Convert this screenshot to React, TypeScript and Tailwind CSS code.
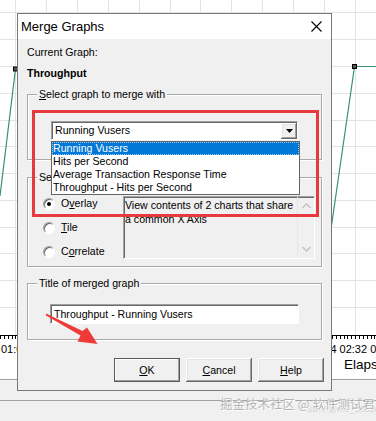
import React from "react";

const bevelRaised =
  "shadow-[inset_-1px_-1px_0_#696969,inset_1px_1px_0_#ffffff,inset_-2px_-2px_0_#a0a0a0,inset_2px_2px_0_#e3e3e3]";
const sunken =
  "border border-t-[#a0a0a0] border-l-[#a0a0a0] border-b-[#ffffff] border-r-[#ffffff] shadow-[inset_1px_1px_0_#696969]";

function Radio({ checked }: { checked?: boolean }) {
  return (
    <span className="flex h-[12px] w-[12px] shrink-0 items-center justify-center rounded-full border border-t-[#a0a0a0] border-l-[#a0a0a0] border-b-[#ffffff] border-r-[#ffffff] bg-white shadow-[inset_1px_1px_0_#696969]">
      {checked && <span className="h-[4px] w-[4px] rounded-full bg-black" />}
    </span>
  );
}

function Group({
  label,
  className,
  children,
}: {
  label: React.ReactNode;
  className: string;
  children?: React.ReactNode;
}) {
  return (
    <div
      className={`relative border border-[#a8a8a8] shadow-[inset_1px_1px_0_#ffffff,1px_1px_0_#ffffff] ${className}`}
    >
      <span className="absolute left-[9px] top-[-7px] bg-[#f0f0f0] px-[2px] leading-[13px]">
        {label}
      </span>
      {children}
    </div>
  );
}

function Btn({ children, def }: { children: React.ReactNode; def?: boolean }) {
  return (
    <div
      className={`flex h-[24px] w-[66px] items-center justify-center bg-[#f0f0f0] leading-[13px] ${
        def
          ? "border border-[#5a5a5a] shadow-[inset_-1px_-1px_0_#a0a0a0,inset_1px_1px_0_#ffffff]"
          : bevelRaised
      }`}
    >
      {children}
    </div>
  );
}

export default function App() {
  const vx = [15, 46, 77, 108, 139, 170, 200, 231, 262, 293, 324, 355];
  const hy = [12, 39, 66, 93, 120, 146, 173, 200, 227, 253, 280, 307];
  const ticks = Array.from({ length: 98 }, (_, i) => Math.round(i * 3.86) + 0.5);
  const items = [
    "Running Vusers",
    "Hits per Second",
    "Average Transaction Response Time",
    "Throughput - Hits per Second",
  ];

  return (
    <div className="relative flex h-[421px] w-[376px] flex-col overflow-hidden bg-[#f0f0f0] font-['Liberation_Sans',Arial,sans-serif] text-black">
      {/* chart canvas */}
      <div className="relative h-[379px] bg-white">
        <svg className="absolute left-0 top-0" width="376" height="379">
          {vx.map((x) => (
            <line key={"v" + x} x1={x + 0.5} y1={0} x2={x + 0.5} y2={335} stroke="#dfe6e6" />
          ))}
          {hy.map((y) => (
            <line key={"h" + y} x1={0} y1={y + 0.5} x2={376} y2={y + 0.5} stroke="#dfe6e6" />
          ))}
          <line x1={0} y1={335.5} x2={376} y2={335.5} stroke="#000" />
          {ticks.map((x) => (
            <line key={"t" + x} x1={x} y1={336} x2={x} y2={339} stroke="#000" />
          ))}
          <polyline points="15.5,69 0,196" fill="none" stroke="#3b8e7e" strokeWidth="1.2" />
          <polyline points="376,66.5 354.5,66.5 330,236" fill="none" stroke="#3b8e7e" strokeWidth="1.2" />
          <rect x={13.5} y={67} width={4} height={4} fill="#555" stroke="#000" />
          <rect x={352.5} y={64.5} width={4} height={4} fill="#555" stroke="#000" />
        </svg>
        <span className="absolute left-[1px] top-[343px] text-[11px] leading-[13px]">01:04</span>
        <span className="absolute left-[309px] top-[343px] whitespace-nowrap text-[11px] leading-[13px]">
          02:24 02:32 02:40
        </span>
        <span className="absolute left-[344px] top-[357px] whitespace-nowrap text-[13.5px] leading-[16px]">
          Elapsed Time
        </span>
      </div>
      <div className="h-[21px] border-t border-[#a0a0a0] bg-[#f0f0f0]" />
      <div className="flex-1 border-t border-[#a0a0a0] bg-[#f0f0f0]" />

      {/* watermark */}
      <span className="absolute left-[300px] top-[404px] whitespace-nowrap text-[9px] leading-[10px] text-[#d2d2d2]">
        CSDN @m0_58550
      </span>
      <span className="absolute left-[220px] top-[396px] whitespace-nowrap font-['Noto_Sans_CJK_SC',sans-serif] text-[12.5px] leading-[15px] text-[#b4b4b4] [text-shadow:0_0_1px_#fff,1px_1px_0_#fff]">
        掘金技术社区 @ 软件测试君
      </span>

      {/* dialog window */}
      <div className="absolute left-[17px] top-[13px] flex h-[378px] w-[315px] flex-col border border-[#787878] bg-[#f0f0f0] text-[10.6px] leading-[13px]">
        <div className="flex h-[25px] items-center justify-between bg-white pl-[3px] pr-[9px]">
          <span className="text-[13px] leading-[16px]">Merge Graphs</span>
          <svg width="11" height="11" viewBox="0 0 11 11">
            <path d="M0.5 0.5 L10.5 10.5 M10.5 0.5 L0.5 10.5" stroke="#000" strokeWidth="1.1" />
          </svg>
        </div>

        <div className="flex flex-1 flex-col px-[9px] pt-[7px]">
          <div>Current Graph:</div>
          <div className="mt-[8px] font-bold">Throughput</div>

          <Group
            className="mt-[14px] h-[66px]"
            label={
              <>
                <u>S</u>elect graph to merge with
              </>
            }
          >
            <div className={`relative ml-[23px] mt-[26px] flex h-[19px] w-[247px] items-center bg-white ${sunken}`}>
              <span className="pl-[3px]">Running Vusers</span>
              <div className={`absolute bottom-0 right-0 top-[1px] flex w-[16px] items-center justify-center bg-[#f0f0f0] ${bevelRaised}`}>
                <svg width="7" height="4" viewBox="0 0 7 4">
                  <polygon points="0,0 7,0 3.5,4" fill="#000" />
                </svg>
              </div>
              <div className="absolute left-[-1px] top-[19px] z-10 flex h-[54px] w-[249px] flex-col border border-[#646464] bg-white">
                {items.map((t, i) => (
                  <div
                    key={t}
                    className={`h-[13px] whitespace-nowrap pl-[1px] leading-[13px] ${
                      i === 0 ? "bg-[#0078d7] text-white outline-1 outline-dotted outline-offset-[-1px] outline-[#9cc8f0]" : ""
                    }`}
                  >
                    {t}
                  </div>
                ))}
              </div>
            </div>
          </Group>

          <Group className="mt-[17px] h-[90px]" label="Select merge type">
            <div className="flex pl-[15px]">
              <div className="mt-[19px] flex w-[80px] flex-col gap-[11px]">
                <div className="flex h-[13px] items-center gap-[6px]">
                  <Radio checked />
                  <span>
                    O<u>v</u>erlay
                  </span>
                </div>
                <div className="flex h-[13px] items-center gap-[6px]">
                  <Radio />
                  <span>
                    <u>T</u>ile
                  </span>
                </div>
                <div className="flex h-[13px] items-center gap-[6px]">
                  <Radio />
                  <span>
                    C<u>o</u>rrelate
                  </span>
                </div>
              </div>
              <div className={`mt-[18px] flex h-[63px] w-[192px] bg-[#f0f0f0] ${sunken}`}>
                <div className="flex-1 pl-[1px] pt-[1px] leading-[14px]">
                  <div className="whitespace-nowrap">View contents of 2 charts that share</div>
                  <div className="whitespace-nowrap">a common X Axis</div>
                </div>
                <div className="flex w-[17px] flex-col items-center justify-between border-l border-[#e6e6e6] py-[6px]">
                  <svg width="9" height="6" viewBox="0 0 9 6">
                    <polyline points="0.5,5 4.5,1 8.5,5" fill="none" stroke="#c2c2c2" strokeWidth="1.4" />
                  </svg>
                  <svg width="9" height="6" viewBox="0 0 9 6">
                    <polyline points="0.5,1 4.5,5 8.5,1" fill="none" stroke="#c2c2c2" strokeWidth="1.4" />
                  </svg>
                </div>
              </div>
            </div>
          </Group>

          <Group className="mt-[16px] h-[57px]" label="Title of merged graph">
            <div className={`ml-[22px] mt-[20px] flex h-[20px] w-[249px] items-center bg-white ${sunken}`}>
              <span className="whitespace-nowrap pl-[3px]">Throughput - Running Vusers</span>
            </div>
          </Group>

          <div className="-mr-[2px] mt-[18px] flex justify-end gap-[6px]">
            <Btn def>
              <span>
                <u>O</u>K
              </span>
            </Btn>
            <Btn>
              <span>
                <u>C</u>ancel
              </span>
            </Btn>
            <Btn>
              <span>
                <u>H</u>elp
              </span>
            </Btn>
          </div>
        </div>
      </div>

      {/* red annotation rectangle */}
      <div className="absolute left-[32px] top-[110px] z-20 h-[107px] w-[287px] border-[3px] border-[#e53b3e]" />

      {/* red annotation arrow */}
      <svg className="absolute left-0 top-0 z-20" width="376" height="421" pointerEvents="none">
        <polygon points="46,313.5 82.5,331 87,327.5 97.5,344 77.5,341.5 80.5,335.5 46,315.5" fill="#f03a3a" />
      </svg>
    </div>
  );
}
